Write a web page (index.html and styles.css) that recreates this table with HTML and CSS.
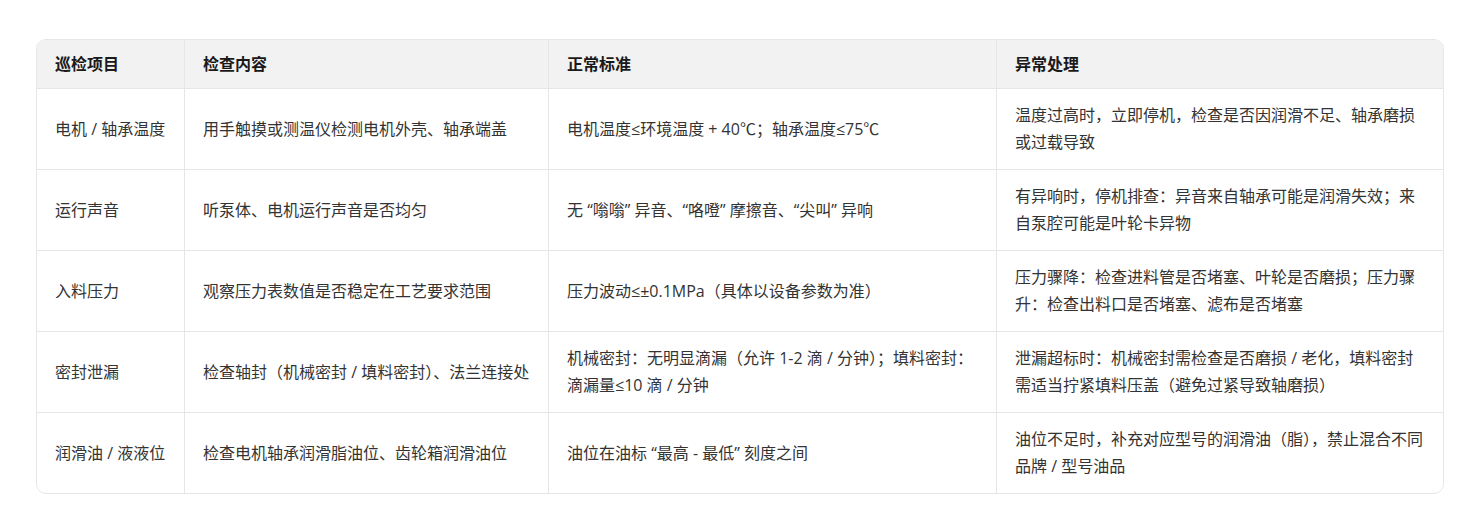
FILE: index.html
```html
<!DOCTYPE html>
<html lang="zh-CN">
<head>
<meta charset="utf-8">
<title>巡检表</title>
<link rel="stylesheet" href="styles.css">
</head>
<body>
<div class="page">
  <div class="table-wrap">
    <table class="inspect">
      <colgroup>
        <col class="c1"><col class="c2"><col class="c3"><col class="c4">
      </colgroup>
      <thead>
        <tr><th>巡检项目</th><th>检查内容</th><th>正常标准</th><th>异常处理</th></tr>
      </thead>
      <tbody>
        <tr>
          <td>电机 / 轴承温度</td>
          <td>用手触摸或测温仪检测电机外壳、轴承端盖</td>
          <td>电机温度≤环境温度 + 40℃；轴承温度≤75℃</td>
          <td>温度过高时，立即停机，检查是否因润滑不足、轴承磨损或过载导致</td>
        </tr>
        <tr>
          <td>运行声音</td>
          <td>听泵体、电机运行声音是否均匀</td>
          <td>无 “嗡嗡” 异音、“咯噔” 摩擦音、“尖叫” 异响</td>
          <td>有异响时，停机排查：异音来自轴承可能是润滑失效；来自泵腔可能是叶轮卡异物</td>
        </tr>
        <tr>
          <td>入料压力</td>
          <td>观察压力表数值是否稳定在工艺要求范围</td>
          <td>压力波动≤±0.1MPa（具体以设备参数为准）</td>
          <td>压力骤降：检查进料管是否堵塞、叶轮是否磨损；压力骤升：检查出料口是否堵塞、滤布是否堵塞</td>
        </tr>
        <tr>
          <td>密封泄漏</td>
          <td>检查轴封（机械密封 / 填料密封）、法兰连接处</td>
          <td>机械密封：无明显滴漏（允许 1-2 滴 / 分钟）；填料密封：滴漏量≤10 滴 / 分钟</td>
          <td>泄漏超标时：机械密封需检查是否磨损 / 老化，填料密封需适当拧紧填料压盖（避免过紧导致轴磨损）</td>
        </tr>
        <tr>
          <td>润滑油 / 液液位</td>
          <td>检查电机轴承润滑脂油位、齿轮箱润滑油位</td>
          <td>油位在油标 “最高 - 最低” 刻度之间</td>
          <td>油位不足时，补充对应型号的润滑油（脂），禁止混合不同品牌 / 型号油品</td>
        </tr>
      </tbody>
    </table>
  </div>
</div>
</body>
</html>
```

FILE: styles.css
```css
html, body {
  margin: 0;
  padding: 0;
  background: #ffffff;
}

body {
  font-family: "Open Sans", "Noto Sans CJK SC", "Noto Sans", sans-serif;
  font-size: 16px;
  color: #333333;
}

.page {
  padding: 39px 27px 0 36px;
}

.table-wrap {
  border: 1px solid #e6e6e6;
  border-radius: 10px;
  overflow: hidden;
}

.inspect {
  width: 100%;
  table-layout: fixed;
  border-collapse: separate;
  border-spacing: 0;
}

.c1 { width: 148px; }
.c2 { width: 364px; }
.c3 { width: 448px; }
.c4 { width: 446px; }

.inspect th,
.inspect td {
  text-align: left;
  vertical-align: middle;
  padding: 13px 18px;
  line-height: 27px;
  border-right: 1px solid #e6e6e6;
  border-bottom: 1px solid #e6e6e6;
}

.inspect th:last-child,
.inspect td:last-child {
  border-right: none;
}

.inspect tbody tr:last-child td {
  border-bottom: none;
}

.inspect th {
  background: #f2f2f2;
  font-weight: 700;
  color: #1a1a1a;
  padding-top: 10px;
  padding-bottom: 10px;
  line-height: 28px;
}

.inspect td {
  height: 54px;
}
```
